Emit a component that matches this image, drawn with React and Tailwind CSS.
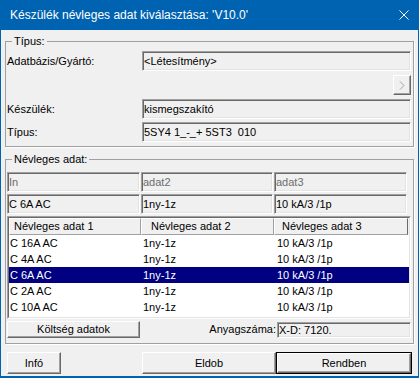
import React from "react";

const rows = [
  ["C 16A AC", "1ny-1z", "10 kA/3 /1p"],
  ["C 4A AC", "1ny-1z", "10 kA/3 /1p"],
  ["C 6A AC", "1ny-1z", "10 kA/3 /1p"],
  ["C 2A AC", "1ny-1z", "10 kA/3 /1p"],
  ["C 10A AC", "1ny-1z", "10 kA/3 /1p"],
];

function Field({ children, className = "" }) {
  return (
    <div
      className={`flex items-center pl-[1px] whitespace-nowrap overflow-hidden border border-[#a0a0a0] border-b-white border-r-white shadow-[inset_1px_1px_0_#696969,inset_-1px_-1px_0_#e3e3e3] ${className}`}
    >
      {children}
    </div>
  );
}

function Btn({ children, className = "" }) {
  return (
    <button
      className={`flex items-center justify-center bg-[#f0f0f0] border border-white border-b-[#696969] border-r-[#696969] shadow-[inset_-1px_-1px_0_#a0a0a0] ${className}`}
    >
      {children}
    </button>
  );
}

export default function App() {
  return (
    <div className="w-[419px] h-[378px] flex flex-col bg-[#f0f0f0] border-x border-b-2 border-[#0063b1] font-['Liberation_Sans',Arial,sans-serif] text-[11px] leading-[13px] text-black overflow-hidden">
      <div className="h-[30px] shrink-0 bg-[#0063b1] flex items-center justify-between pl-[9px] pr-[9px] text-white text-[12px]">
        <span>Készülék névleges adat kiválasztása: 'V10.0'</span>
        <svg width="10" height="10" viewBox="0 0 10 10">
          <path d="M0.5 0.5 L9.5 9.5 M9.5 0.5 L0.5 9.5" stroke="#fff" strokeWidth="1" />
        </svg>
      </div>

      <fieldset className="mt-[5px] mx-[4px] border border-[#a0a0a0] shadow-[1px_1px_0_#fff] pt-[3px] pb-[4px] pl-[1px] pr-[2px]">
        <legend className="ml-[5px] px-[2px] leading-[13px]">Típus:</legend>
        <div className="flex h-[20px] items-center">
          <div className="w-[135px]">Adatbázis/Gyártó:</div>
          <Field className="flex-1 h-full">&lt;Létesítmény&gt;</Field>
        </div>
        <div className="flex justify-end mt-[4px]">
          <Btn className="w-[18px] h-[20px]">
            <svg width="6" height="9" viewBox="0 0 6 9">
              <path d="M1 0.5 L5 4.5 L1 8.5" fill="none" stroke="#a0a0a0" strokeWidth="1" />
            </svg>
          </Btn>
        </div>
        <div className="flex h-[20px] items-center mt-[4px]">
          <div className="w-[135px]">Készülék:</div>
          <Field className="flex-1 h-full">kismegszakító</Field>
        </div>
        <div className="flex h-[20px] items-center mt-[3px]">
          <div className="w-[135px]">Típus:</div>
          <Field className="flex-1 h-full">5SY4 1_-_+ 5ST3&nbsp;&nbsp;010</Field>
        </div>
      </fieldset>

      <fieldset className="mt-[6px] mx-[4px] border border-[#a0a0a0] shadow-[1px_1px_0_#fff] pt-[6px] pb-[5px] pl-[1px] pr-[2px]">
        <legend className="ml-[5px] px-[2px] leading-[13px]">Névleges adat:</legend>
        <div className="grid grid-cols-[133px_132px_133px] gap-x-[1px] h-[20px] text-[#6d6d6d]">
          <Field>In</Field>
          <Field>adat2</Field>
          <Field>adat3</Field>
        </div>
        <div className="grid grid-cols-[133px_132px_133px] gap-x-[1px] h-[20px] mt-[2px]">
          <Field>C 6A AC</Field>
          <Field>1ny-1z</Field>
          <Field>10 kA/3 /1p</Field>
        </div>

        <div className="mt-[2px] w-[404px] h-[103px] border border-[#a0a0a0] border-b-white border-r-white">
          <div className="h-full border border-[#696969] border-b-[#e3e3e3] border-r-[#e3e3e3] bg-white overflow-hidden">
            <div className="grid grid-cols-[132px_133px_134px] h-[17px] bg-[#f0f0f0]">
              <div className="flex items-center pl-[4px] border border-white border-b-[#a0a0a0] border-r-[#a0a0a0]">Névleges adat 1</div>
              <div className="flex items-center pl-[9px] border border-white border-b-[#a0a0a0] border-r-[#a0a0a0]">Névleges adat 2</div>
              <div className="flex items-center pl-[7px] border border-white border-b-[#a0a0a0] border-r-[#696969]">Névleges adat 3</div>
            </div>
            <div className="h-[78px] overflow-hidden">
              {rows.map((r, i) => (
                <div
                  key={i}
                  className={`grid grid-cols-[132px_133px_134px] h-[16px] items-center ${i === 2 ? "bg-[#000080] text-white" : ""}`}
                >
                  <div className="pl-[1px]">{r[0]}</div>
                  <div className="pl-[2px]">{r[1]}</div>
                  <div className="pl-[3px]">{r[2]}</div>
                </div>
              ))}
            </div>
          </div>
        </div>

        <div className="flex h-[17px] mt-[2px]">
          <Btn className="w-[133px] h-full">Költség adatok</Btn>
          <div className="flex-1 flex items-center justify-end pr-[1px]">Anyagszáma:</div>
          <Field className="w-[134px] h-[16px] mt-[1px]">X-D: 7120.</Field>
        </div>
      </fieldset>

      <div className="flex h-[22px] mt-[8px] pl-[6px] pr-[6px]">
        <Btn className="w-[54px] h-full">Infó</Btn>
        <Btn className="w-[134px] h-full ml-auto">Eldob</Btn>
        <div className="w-[136px] h-full border border-black">
          <Btn className="w-full h-full">Rendben</Btn>
        </div>
      </div>
    </div>
  );
}
